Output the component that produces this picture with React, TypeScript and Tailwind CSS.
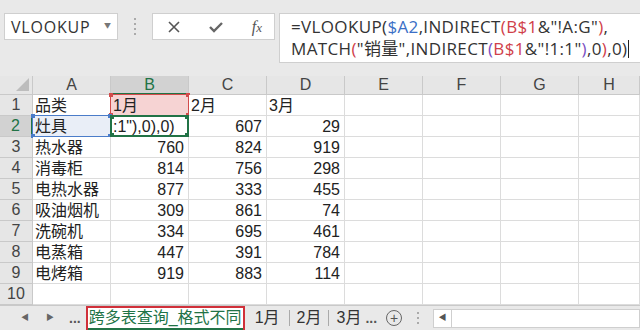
import React from 'react';

const cols = ['A', 'B', 'C', 'D', 'E', 'F', 'G', 'H'];

const rows: (string | number)[][] = [
  ['品类', '1月', '2月', '3月'],
  ['灶具', ':1"),0),0)', 607, 29],
  ['热水器', 760, 824, 919],
  ['消毒柜', 814, 756, 298],
  ['电热水器', 877, 333, 455],
  ['吸油烟机', 309, 861, 74],
  ['洗碗机', 334, 695, 461],
  ['电蒸箱', 447, 391, 784],
  ['电烤箱', 919, 883, 114],
  [],
];

const cellFont = { fontFamily: '"Liberation Sans", "Noto Sans CJK SC", sans-serif' };
const uiFont = { fontFamily: '"Open Sans", "Noto Sans CJK SC", sans-serif' };

function Corners({ color }: { color: string }) {
  return (
    <>
      <span className={`absolute -left-[2px] -top-[2px] w-[4px] h-[4px] ${color}`} />
      <span className={`absolute -right-[2px] -top-[2px] w-[4px] h-[4px] ${color}`} />
      <span className={`absolute -left-[2px] -bottom-[2px] w-[4px] h-[4px] ${color}`} />
      <span className={`absolute -right-[2px] -bottom-[2px] w-[4px] h-[4px] ${color}`} />
    </>
  );
}

function Cell({ r, c, value }: { r: number; c: number; value?: string | number }) {
  const isNum = typeof value === 'number';
  const a2 = r === 1 && c === 0;
  const b1 = r === 0 && c === 1;
  const b2 = r === 1 && c === 1;
  return (
    <div
      className={`relative h-[21px] border-r border-b border-[#dcdcdc] text-[16px] leading-[21px] text-[#222] whitespace-nowrap overflow-visible ${
        isNum ? 'text-right pr-[4px]' : 'pl-[2px]'
      } ${a2 ? 'bg-[#e9eef7]' : b1 ? 'bg-[#f6d3d3]' : 'bg-white'}`}
      style={cellFont}
    >
      {value}
      {a2 && (
        <div className="absolute -left-px -top-px -right-px -bottom-px border border-[#4a7cc9]">
          <Corners color="bg-[#4a7cc9]" />
        </div>
      )}
      {b1 && (
        <div className="absolute -left-px -top-px -right-px -bottom-px border border-[#d24b4b]">
          <Corners color="bg-[#d24b4b]" />
        </div>
      )}
      {b2 && (
        <div className="absolute -left-px -top-[1px] -right-px -bottom-px border-2 border-[#217346]">
          <Corners color="bg-[#217346]" />
        </div>
      )}
    </div>
  );
}

export default function App() {
  return (
    <div className="w-[640px] h-[330px] overflow-hidden bg-[#e9e9e9] flex flex-col" style={uiFont}>
      {/* formula bar */}
      <div className="h-[76px] flex items-start pt-[13px] pl-[4px]">
        <div className="w-[114px] h-[27px] bg-white border border-[#cfcfcf] flex items-center justify-between pl-[6px] pr-[6px]">
          <span className="text-[16px] text-[#333] tracking-[0.8px]">VLOOKUP</span>
          <span className="text-[7px] text-[#777]">▼</span>
        </div>
        <div className="w-[34px] h-[27px] flex flex-col items-center justify-center gap-[3px]">
          <span className="w-[2px] h-[2px] bg-[#aaa]" />
          <span className="w-[2px] h-[2px] bg-[#aaa]" />
          <span className="w-[2px] h-[2px] bg-[#aaa]" />
          <span className="w-[2px] h-[2px] bg-[#aaa]" />
        </div>
        <div className="w-[123px] h-[27px] bg-white border border-[#cfcfcf] flex items-center justify-between pl-[14px] pr-[12px]">
          <svg width="14" height="14" viewBox="0 0 14 14">
            <path d="M2 2 L12 12 M12 2 L2 12" stroke="#555" strokeWidth="1.6" />
          </svg>
          <svg width="16" height="14" viewBox="0 0 16 14">
            <path d="M2 7 L6 11 L14 3" stroke="#666" strokeWidth="2.4" fill="none" />
          </svg>
          <span className="text-[16px] italic text-[#555]" style={{ fontFamily: '"Liberation Serif", serif' }}>
            f<span className="text-[13px]">x</span>
          </span>
        </div>
        <div className="ml-[4px] flex-1 h-[50px] bg-white border border-[#cfcfcf] border-r-0 pl-[11px] pt-[2px] text-[17px] leading-[22px] tracking-[0.35px] text-[#333]">
          <div>
            =VLOOKUP(<span className="text-[#3b6fc6]">$A2</span>,INDIRECT
            <span className="text-[#d0404a]">(B$1</span>&amp;"!A:G"<span className="text-[#d0404a]">)</span>,
          </div>
          <div className="flex items-center">
            <span>
              MATCH<span className="text-[#d0404a]">(</span>"销量",INDIRECT<span className="text-[#7a4fc2]">(</span>
              <span className="text-[#d0404a]">B$1</span>&amp;"!1:1"<span className="text-[#7a4fc2]">)</span>,0
              <span className="text-[#d0404a]">)</span>,0)
            </span>
            <span className="w-px h-[18px] bg-[#222] ml-[1px]" />
          </div>
        </div>
      </div>

      {/* sheet */}
      <div className="grid grid-cols-[33px_78px_78px_78px_78px_78px_78px_78px_1fr] bg-white">
        <div className="relative h-[19px] bg-[#e6e6e6] border-r border-b border-[#c9c9c9]">
          <div className="absolute right-[3px] bottom-[3px] w-0 h-0 border-l-[13px] border-l-transparent border-b-[13px] border-b-[#bdbdbd]" />
        </div>
        {cols.map((c) => (
          <div
            key={c}
            className={`h-[19px] flex items-center justify-center text-[16px] leading-none border-r ${
              c === 'B'
                ? 'bg-[#d2d2d2] text-[#217346] border-b-2 border-b-[#217346] border-r-[#c9c9c9]'
                : 'bg-[#e6e6e6] text-[#444] border-b border-[#c9c9c9]'
            }`}
            style={cellFont}
          >
            {c}
          </div>
        ))}
        {rows.map((row, r) => (
          <React.Fragment key={r}>
            <div
              className={`h-[21px] flex items-center justify-center text-[16px] border-b ${
                r === 1
                  ? 'bg-[#d2d2d2] text-[#217346] border-r-2 border-r-[#217346] border-b-[#c9c9c9]'
                  : 'bg-[#e6e6e6] text-[#444] border-r border-[#c9c9c9]'
              }`}
              style={cellFont}
            >
              {r + 1}
            </div>
            {cols.map((c, ci) => (
              <Cell key={c} r={r} c={ci} value={row[ci]} />
            ))}
          </React.Fragment>
        ))}
      </div>

      {/* sheet tabs */}
      <div className="flex-1 flex items-center border-t border-[#c9c9c9] bg-[#e9e9e9] text-[16px] text-[#333]" style={cellFont}>
        <span className="ml-[21px] text-[8px] text-[#666]">◀</span>
        <span className="ml-[17px] text-[8px] text-[#666]">▶</span>
        <span className="ml-[15px] text-[14px] font-bold text-[#555] leading-none">...</span>
        <div className="ml-[5px] h-[24px] w-[159px] border-2 border-[#d0303a] bg-white flex items-center justify-center relative">
          <span className="text-[#217346]">跨多表查询_格式不同</span>
          <span className="absolute left-0 right-0 -bottom-[2px] h-[2px] bg-[#217346]" />
        </div>
        <span className="ml-[10px]">1月</span>
        <span className="ml-[9px] w-px h-[16px] bg-[#aaa]" />
        <span className="ml-[7px]">2月</span>
        <span className="ml-[7px] w-px h-[16px] bg-[#aaa]" />
        <span className="ml-[7px]">3月</span>
        <span className="ml-[4px] text-[14px] font-bold text-[#555] leading-none">...</span>
        <span className="ml-[9px] w-[16px] h-[16px] rounded-full border border-[#666] flex items-center justify-center text-[14px] leading-none text-[#555]">+</span>
        <span className="ml-[15px] flex flex-col gap-[3px]">
          <span className="w-[2px] h-[2px] bg-[#aaa]" />
          <span className="w-[2px] h-[2px] bg-[#aaa]" />
          <span className="w-[2px] h-[2px] bg-[#aaa]" />
        </span>
        <div className="ml-[14px] flex-1 h-[19px] bg-white border border-[#cfcfcf] flex items-center">
          <span className="w-[18px] flex items-center justify-center text-[8px] text-[#555] border-r border-[#cfcfcf] h-full">◀</span>
        </div>
      </div>
    </div>
  );
}
